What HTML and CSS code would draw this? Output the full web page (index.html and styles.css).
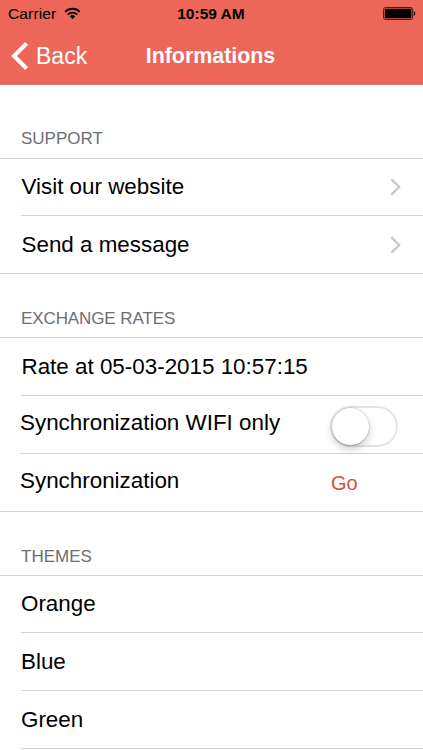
FILE: index.html
```html
<!DOCTYPE html>
<html lang="en">
<head>
<meta charset="utf-8">
<title>Informations</title>
<link rel="stylesheet" href="styles.css">
</head>
<body>
<header class="header">
  <div class="status">
    <div class="carrier"><span>Carrier</span>
      <svg class="wifi" width="17" height="13" viewBox="0 0 18 13" fill="none" stroke="#000" stroke-width="1.9"><path d="M1.3 4.7a10.8 10.8 0 0 1 15.4 0M4 7.6a7 7 0 0 1 10 0"/><path d="M6.1 9.6a4.1 4.1 0 0 1 5.8 0L9 12.4z" fill="#000" stroke="none"/></svg>
    </div>
    <span class="time">10:59 AM</span>
    <svg class="battery" width="33" height="13" viewBox="0 0 33 13"><rect x=".6" y=".6" width="29" height="11.8" rx="1.8" fill="none" stroke="#3d1713" stroke-width="1"/><rect x="1.8" y="1.8" width="26.6" height="9.4" rx=".8"/><path d="M30.8 4.3q1.6.5 1.6 2.2t-1.6 2.2z"/></svg>
  </div>
  <nav class="nav">
    <div class="back"><svg width="18" height="28" viewBox="0 0 18 28" fill="none" stroke="#fff" stroke-width="4"><path d="M15.6 1.5 3 14l12.6 12.5"/></svg><span>Back</span></div>
    <h1 class="title">Informations</h1>
  </nav>
</header>
<main>
  <h2 class="heading">SUPPORT</h2>
  <div class="group">
    <div class="row"><span class="visit">Visit our website</span><svg class="chevron" width="12" height="18" viewBox="0 0 12 18"><path d="M1.4 1.4 9.2 9l-7.8 7.6"/></svg></div>
    <div class="row"><span class="send">Send a message</span><svg class="chevron" width="12" height="18" viewBox="0 0 12 18"><path d="M1.4 1.4 9.2 9l-7.8 7.6"/></svg></div>
  </div>
  <h2 class="heading rates">EXCHANGE RATES</h2>
  <div class="group rate-group">
    <div class="row"><span class="rate">Rate at 05-03-2015 10:57:15</span></div>
    <div class="row control"><span class="wifi-only">Synchronization WIFI only</span><div class="switch"><div class="knob"></div></div></div>
    <div class="row control"><span class="sync">Synchronization</span><span class="go">Go</span></div>
  </div>
  <h2 class="heading themes">THEMES</h2>
  <div class="group theme-group">
    <div class="row"><span>Orange</span></div>
    <div class="row"><span>Blue</span></div>
    <div class="row"><span>Green</span></div>
  </div>
</main>
</body>
</html>
```
FILE: styles.css
```css
* { box-sizing: border-box; }
body {
  margin: 0;
  height: 750px;
  overflow: hidden;
  background: #fff;
  color: #000;
  font-family: "Liberation Sans", Arial, sans-serif;
}
.header {
  height: 85px;
  background: #ec665a;
  border-bottom: 1px solid #c27a74;
}
.status {
  display: grid;
  grid-template-columns: 1fr auto 1fr;
  align-items: center;
  height: 28px;
  padding: 0 7px 0 8px;
  font-size: 15.5px;
  line-height: 28px;
}
.carrier { display: flex; align-items: center; gap: 8px; letter-spacing: .15px; }
.wifi { margin-top: -2px; }
.time { margin-right: 2px; font-weight: bold; letter-spacing: 0; }
.battery { justify-self: end; margin-top: -1px; }
.nav {
  display: grid;
  grid-template-columns: 1fr auto 1fr;
  align-items: center;
  height: 56px;
  padding: 0 11px;
  color: #fff;
}
.back { display: flex; align-items: center; gap: 7px; font-size: 23px; }
.title { margin: 0 2px 0 0; font-size: 21.4px; line-height: 56px; }
.heading {
  margin: 0;
  height: 73px;
  padding: 43px 0 0 21px;
  color: #6d6d72;
  font-size: 17px;
  font-weight: normal;
  line-height: 22px;
}
.rates { height: 63px; padding-top: 34px; letter-spacing: -.1px; }
.themes { height: 63px; padding-top: 34px; }
.group { border-top: 1px solid #d4d4d6; border-bottom: 1px solid #d4d4d6; }
.row {
  display: flex;
  align-items: center;
  justify-content: space-between;
  height: 58px;
  margin-left: 21px;
  padding-right: 21px;
  border-bottom: 1px solid #d4d4d6;
  font-size: 22.4px;
  line-height: 26px;
}
.row:first-child { height: 57px; }
.row:last-child { height: 57px; border-bottom: 0; }
.rate-group .row:first-child { height: 58px; }
.theme-group { border-bottom: 0; }
.theme-group .row:last-child { height: 58px; border-bottom: 1px solid #d4d4d6; }
.visit, .send, .rate { padding-left: .5px; }
.chevron { fill: none; stroke: #c7c7cc; stroke-width: 2.3; }
.control { margin-left: 20px; padding-right: 25px; border-image: linear-gradient(to right, transparent 1px, #d4d4d6 1px) 1; }
.wifi-only, .sync { margin-top: -4px; }
.go { width: 67px; color: #d94b40; font-size: 20px; }
.switch {
  width: 68px;
  height: 41px;
  margin-top: 4px;
  border: 2px solid #e4e4e4;
  border-radius: 21px;
}
.knob {
  width: 37px;
  height: 37px;
  border-radius: 50%;
  background: #fff;
  box-shadow: 0 0 0 .5px #ccc, 0 1px 1px #888, 0 4px 8px #0003;
}
```
